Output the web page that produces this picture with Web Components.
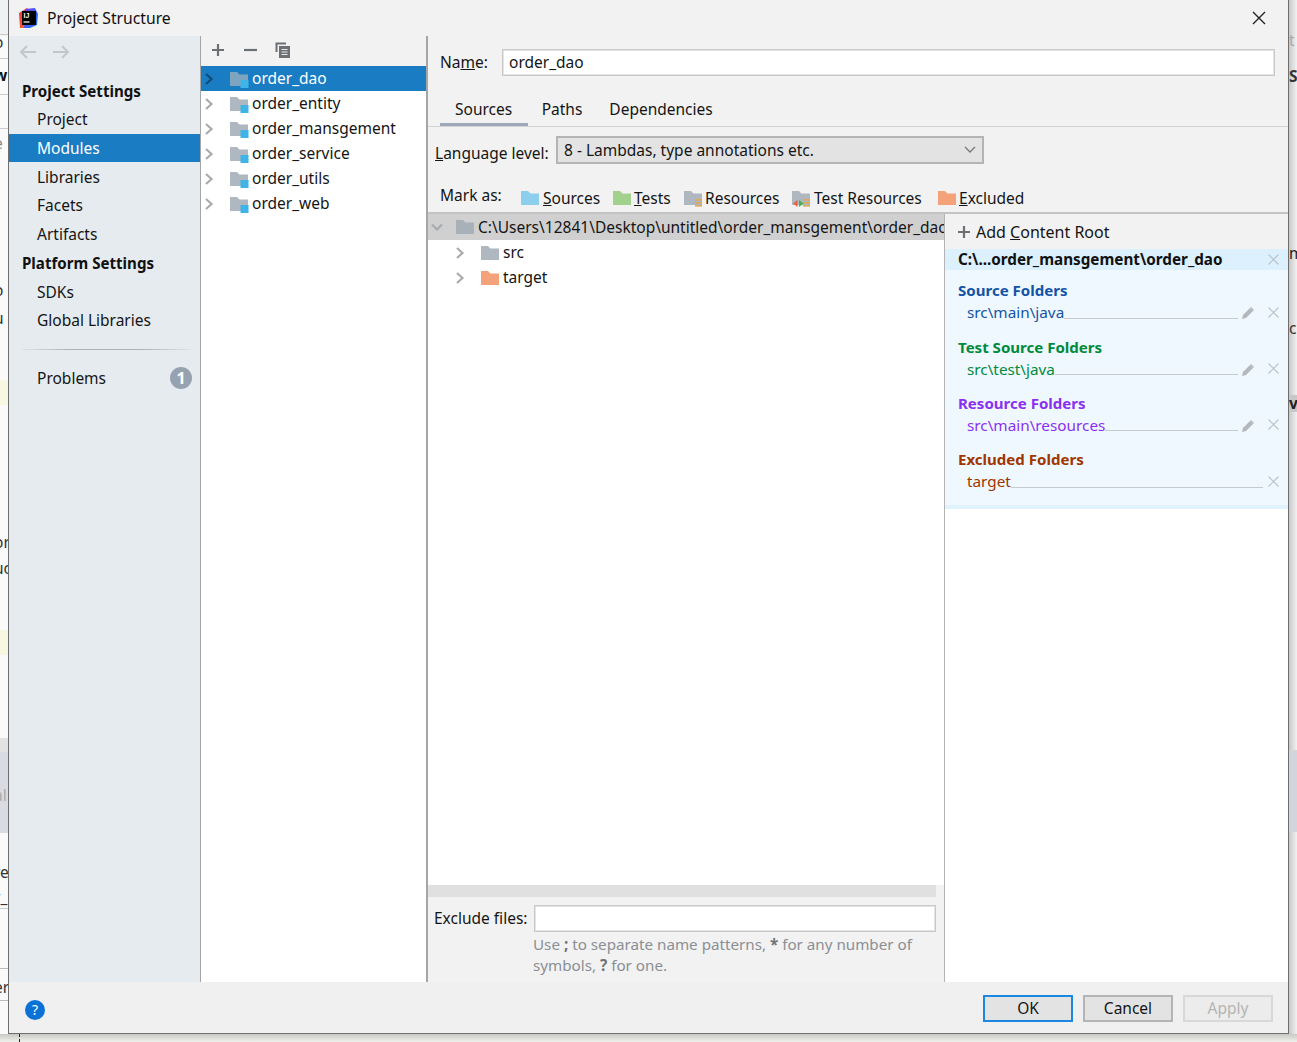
<!DOCTYPE html>
<html lang="en">
<head>
<meta charset="utf-8">
<title>Project Structure</title>
<style>
  html, body { margin: 0; height: 100%; overflow: hidden; }
  body { position: relative; background: #f4f4f2; font-family: "Noto Sans", "Open Sans", sans-serif; font-size: 15.5px; color: #151515; }
</style>
</head>
<body>
<desktop-scraps></desktop-scraps>
<structure-dialog>
  <title-bar slot="title">Project Structure</title-bar>

  <side-nav slot="nav">
    <nav-arrows></nav-arrows>
    <nav-head>Project Settings</nav-head>
    <nav-item>Project</nav-item>
    <nav-item selected>Modules</nav-item>
    <nav-item>Libraries</nav-item>
    <nav-item>Facets</nav-item>
    <nav-item>Artifacts</nav-item>
    <nav-head style="height: 28.7px">Platform Settings</nav-head>
    <nav-item>SDKs</nav-item>
    <nav-item>Global Libraries</nav-item>
    <nav-rule></nav-rule>
    <nav-item badge="1">Problems</nav-item>
  </side-nav>

  <module-list slot="modules">
    <tree-row selected>order_dao</tree-row>
    <tree-row>order_entity</tree-row>
    <tree-row>order_mansgement</tree-row>
    <tree-row>order_service</tree-row>
    <tree-row>order_utils</tree-row>
    <tree-row>order_web</tree-row>
  </module-list>

  <module-editor slot="editor"></module-editor>

  <dialog-footer slot="footer"></dialog-footer>
</structure-dialog>

<script>
  const font = `font-family: "Noto Sans", "Open Sans", sans-serif;`

  const folderPath = 'M0 1h7l2.5 2.5H18V15H0z'

  function folderIcon (color, extra = '') {
    return `<svg width="18" height="17" viewBox="0 0 18 17" style="display:block;flex:none;overflow:visible"><path d="${folderPath}" fill="${color}"/>${extra}</svg>`
  }

  const moduleMark = '<rect x="10.5" y="9" width="8" height="8" fill="#3fb4e6"/>'
  const resMark = '<g fill="#e0a85a"><rect x="11" y="9" width="7" height="1.6"/><rect x="11" y="12" width="7" height="1.6"/><rect x="11" y="15" width="7" height="1.6"/></g>'
  const testResMark = resMark + '<path d="M5.5 10v7L1 13.5z" fill="#e8643c"/><path d="M7 10v7l4.5-3.5z" fill="#4caf50"/>'

  function chevron (color, dir = 'right') {
    const d = dir === 'right' ? 'M2 1l5.5 5L2 11' : 'M1 3.5l5 5 5-5'
    return `<svg width="12" height="12" viewBox="0 0 12 12" style="display:block;flex:none"><path d="${d}" fill="none" stroke="${color}" stroke-width="2.2"/></svg>`
  }

  class Base extends HTMLElement {
    connectedCallback () {
      if (!this.shadowRoot) this.attachShadow({ mode: 'open' })
      this.render()
    }
  }

  class DesktopScraps extends Base {
    render () {
      const bits = [
        [0, 33, 'o', 400, '#333'], [0, 66, 'w', 700, '#111'], [0, 134, 'e', 400, '#888'],
        [0, 281, 'o', 400, '#333'], [0, 309, 'u', 400, '#333'], [0, 533, 'or', 400, '#333'],
        [0, 559, 'uc', 400, '#333'], [0, 786, 'al', 400, '#aaa'], [0, 863, 're', 400, '#333'],
        [0, 888, 'r_', 400, '#333'], [0, 978, 'er', 400, '#333']
      ].map(b => `<span style="left:${b[0] - 6}px;top:${b[1]}px;font-weight:${b[3]};color:${b[4]}">${b[2]}</span>`).join('')
      const right = [
        [1289, 31, 't', 400, '#aaa'], [1289, 67, 'SI', 700, '#333'], [1289, 244, 'm', 400, '#222'],
        [1289, 319, 'ci', 400, '#333'], [1289, 394, 'v', 700, '#222']
      ].map(b => `<span style="left:${b[0]}px;top:${b[1]}px;font-weight:${b[3]};color:${b[4]}">${b[2]}</span>`).join('')
      this.shadowRoot.innerHTML = `
      <style>
        :host { position: absolute; inset: 0; display: block; overflow: hidden; background: #fafafa; ${font} font-size: 15.5px; }
        span { position: absolute; line-height: 18px; }
        i { position: absolute; display: block; }
      </style>
      <i style="left:0;top:0;width:9px;height:36px;background:#eef2f2"></i>
      <i style="left:0;top:34px;width:9px;height:1px;background:#ccc"></i>
      <i style="left:0;top:58px;width:9px;height:1px;background:#ccc"></i>
      <i style="left:0;top:94px;width:9px;height:1px;background:#ccc"></i>
      <i style="left:0;top:128px;width:9px;height:1px;background:#ccc"></i>
      <i style="left:0;top:380px;width:9px;height:25px;background:#f7f7e2"></i>
      <i style="left:0;top:630px;width:9px;height:25px;background:#f7f7e2"></i>
      <i style="left:0;top:738px;width:9px;height:14px;background:#e2e2e2"></i>
      <i style="left:0;top:752px;width:9px;height:81px;background:#d8dce2"></i>
      <i style="left:0;top:908px;width:9px;height:1px;background:#ccc"></i>
      <i style="left:0;top:968px;width:9px;height:1px;background:#bbb"></i>
      <i style="left:0;top:1000px;width:9px;height:1px;background:#bbb"></i>
      <i style="left:1289px;top:0;width:8px;height:1042px;background:linear-gradient(90deg,#c8c8c8,#f2f2f2)"></i>
      <i style="left:1289px;top:395px;width:8px;height:17px;background:#c8c8c8"></i>
      <i style="left:1289px;top:750px;width:8px;height:82px;background:#d2d6dc"></i>
      <i style="left:0;top:1034px;width:1297px;height:8px;background:linear-gradient(180deg,#c8c8c4,#efefec)"></i>
      <i style="left:19px;top:1034px;width:0;height:8px;border-left:1px dashed #222"></i>
      ${bits}${right}
      `
    }
  }

  class StructureDialog extends Base {
    render () {
      this.shadowRoot.innerHTML = `
      <style>
        :host { position: absolute; left: 8px; top: 0; width: 1279px; height: 1033px; display: flex; flex-direction: column;
          background: #f2f2f2; border-left: 1px solid #6e6e6e; border-right: 1px solid #6e6e6e; border-bottom: 1px solid #6e6e6e; }
        .body { display: flex; height: 946px; }
        ::slotted([slot=nav]) { flex: none; }
      </style>
      <slot name="title"></slot>
      <div class="body">
        <slot name="nav"></slot>
        <slot name="modules"></slot>
        <slot name="editor"></slot>
      </div>
      <slot name="footer"></slot>
      `
    }
  }

  class TitleBar extends Base {
    render () {
      this.shadowRoot.innerHTML = `
      <style>
        :host { display: flex; align-items: center; height: 36px; flex: none; background: #f2f2f2; font-size: 15.7px; color: #111; }
        svg { display: block; }
        .logo { margin-left: 10px; margin-right: 9px; }
        .text { flex: 1; }
        .close { margin-right: 22px; }
      </style>
      <svg class="logo" width="19" height="20" viewBox="0 0 19 20">
        <defs>
          <linearGradient id="a" x1="0" y1="0" x2="1" y2="1"><stop offset="0" stop-color="#fe2857"/><stop offset="1" stop-color="#f97a12"/></linearGradient>
          <linearGradient id="b" x1="0" y1="0" x2="1" y2="1"><stop offset="0" stop-color="#7a3cf0"/><stop offset="1" stop-color="#087cfa"/></linearGradient>
        </defs>
        <path d="M0 5L8 0l4 4-6 16H1z" fill="url(#a)"/>
        <path d="M6 1l10-1 3 6-1 11-7 3H5z" fill="url(#b)"/>
        <rect x="3" y="3" width="14" height="14" fill="#000"/>
        <text x="4.6" y="10" font-size="7" font-weight="700" fill="#fff" font-family="Liberation Sans, sans-serif">IJ</text>
        <rect x="4.5" y="13.4" width="6" height="1.2" fill="#fff"/>
      </svg>
      <span class="text"><slot></slot></span>
      <svg class="close" width="14" height="14" viewBox="0 0 14 14"><path d="M1 1l12 12M13 1L1 13" stroke="#222" stroke-width="1.4" fill="none"/></svg>
      `
    }
  }

  class SideNav extends Base {
    render () {
      this.shadowRoot.innerHTML = `
      <style>
        :host { display: flex; flex-direction: column; width: 191px; background: #e6ebf0; border-right: 1px solid #a6a6a6; }
      </style>
      <slot></slot>
      `
    }
  }

  class NavArrows extends Base {
    render () {
      const arrow = d => `<svg width="18" height="14" viewBox="0 0 18 14"><path d="${d}" fill="none" stroke="#c4c7ca" stroke-width="2"/></svg>`
      this.shadowRoot.innerHTML = `
      <style>
        :host { display: flex; gap: 15px; height: 41.8px; padding-left: 10px; padding-top: 9px; box-sizing: border-box; }
      </style>
      ${arrow('M17 7H2M8 1L2 7l6 6')}
      ${arrow('M1 7h15M10 1l6 6-6 6')}
      `
    }
  }

  class NavHead extends Base {
    render () {
      this.shadowRoot.innerHTML = `
      <style>
        :host { display: flex; align-items: center; height: 27px; padding-left: 13px; font-weight: 700; font-size: 15.1px; color: #111; white-space: nowrap; }
      </style>
      <slot></slot>
      `
    }
  }

  class NavItem extends Base {
    render () {
      const selected = this.hasAttribute('selected')
      const badge = this.getAttribute('badge')
      this.shadowRoot.innerHTML = `
      <style>
        :host { display: flex; align-items: center; height: 28.75px; padding-left: 28px; padding-right: 8px;
          background: ${selected ? '#1a7dc4' : 'transparent'}; color: ${selected ? '#fff' : '#151515'}; white-space: nowrap; }
        .text { flex: 1; }
        .badge { width: 22px; height: 22px; border-radius: 50%; background: #96a2b0; color: #fff; font-size: 16px; font-weight: 700;
          display: flex; align-items: center; justify-content: center; }
      </style>
      <span class="text"><slot></slot></span>
      ${badge ? `<span class="badge">${badge}</span>` : ''}
      `
    }
  }

  class NavRule extends Base {
    render () {
      this.shadowRoot.innerHTML = `
      <style>
        :host { display: block; height: 1px; margin: 14px 9px 14px 13px; background: linear-gradient(90deg, #e0e3e6, #adb0b3 30%, #adb0b3 70%, #e0e3e6); }
      </style>
      `
    }
  }

  class ModuleList extends Base {
    render () {
      const tool = body => `<svg width="18" height="18" viewBox="0 0 18 18">${body}</svg>`
      this.shadowRoot.innerHTML = `
      <style>
        :host { display: flex; flex-direction: column; width: 225px; flex: none; background: #fff; border-right: 2px solid #a6a6a6; }
        .bar { display: flex; align-items: center; height: 30px; flex: none; background: #f2f2f2; padding-left: 8px; gap: 14px; box-sizing: border-box; padding-bottom: 3px; }
        svg { display: block; }
        svg:last-child { margin-left: 1px; }
      </style>
      <div class="bar">
        ${tool('<path d="M9 3v12M3 9h12" stroke="#6c7074" stroke-width="2.2"/>')}
        ${tool('<path d="M3 9h13" stroke="#6c7074" stroke-width="2.2"/>')}
        ${tool('<path d="M2.5 11V2.5H12" fill="none" stroke="#6c7074" stroke-width="2"/><rect x="5" y="5" width="11" height="12" fill="#6c7074"/><path d="M7.5 8.5h6M7.5 11h6M7.5 13.5h6" stroke="#e8e8e8" stroke-width="1.2"/>')}
      </div>
      <slot></slot>
      `
    }
  }

  class TreeRow extends Base {
    render () {
      const selected = this.hasAttribute('selected')
      this.shadowRoot.innerHTML = `
      <style>
        :host { display: flex; align-items: center; height: 25px; background: ${selected ? '#1a7dc4' : 'transparent'}; color: ${selected ? '#fff' : '#151515'}; white-space: nowrap; }
        .chev { margin-left: 3px; margin-right: 14px; }
        .ico { margin-right: 4px; margin-top: 1px; }
        .text { margin-bottom: 2px; }
      </style>
      <span class="chev">${chevron(selected ? '#0d4a78' : '#a8abae')}</span>
      <span class="ico">${folderIcon(selected ? '#7fa4c0' : '#afb8c0', moduleMark)}</span>
      <span class="text"><slot></slot></span>
      `
    }
  }

  class ModuleEditor extends Base {
    render () {
      const mark = (icon, text, width, gap = 3) => `<span class="mark" style="width:${width}px;gap:${gap}px">${icon}<span>${text}</span></span>`
      this.shadowRoot.innerHTML = `
      <style>
        :host { display: flex; flex-direction: column; flex: 1; min-width: 0; background: #f2f2f2; }
        .name { display: flex; align-items: center; height: 52px; flex: none; padding-left: 12px; }
        .name label { width: 62px; }
        .field { background: #fff; border: 1px solid #c8c8c8; box-shadow: inset 0 0 0 1px #e4e4e4; box-sizing: border-box; }
        .name .field { width: 773px; height: 27px; padding-left: 6px; line-height: 25px; }
        .tabs { display: flex; height: 39px; flex: none; padding-left: 12px; border-bottom: 1px solid #d2d2d2; box-sizing: border-box; }
        .tab { padding: 0 14px; line-height: 42px; height: 38px; }
        .tab:last-child { padding-left: 13px; }
        .tab.on { padding: 0 15.5px 0 15px; border-bottom: 3px solid #9da8ba; box-sizing: border-box; }
        .lang { display: flex; align-items: center; height: 46px; flex: none; padding-left: 7px; }
        .lang label { width: 121px; position: relative; top: 3px; }
        .combo { display: flex; align-items: center; justify-content: space-between; width: 428px; height: 28px; box-sizing: border-box;
          background: #e3e3e3; border: 2px solid #b4b4b4; padding: 0 6px; }
        .marks { display: flex; align-items: center; height: 39px; flex: none; padding-left: 12px; border-bottom: 2px solid #c4c4c4; box-sizing: content-box; }
        .marks > label { width: 81px; position: relative; top: 2px; }
        .mark { display: flex; align-items: center; flex: none; white-space: nowrap; position: relative; top: 5.5px; }
        .split { display: flex; flex: 1; min-height: 0; }
        .left { display: flex; flex-direction: column; width: 516px; flex: none; }
        .root { display: flex; align-items: center; height: 26px; flex: none; background: #d0d0d0; white-space: nowrap; overflow: hidden; }
        .root .chev { margin-left: 3px; margin-right: 13px; }
        .root .ico { margin-right: 4px; margin-top: 1px; }
        .files { flex: 1; background: #fff; padding: 0; }
        .scroll { height: 12px; flex: none; margin-right: 8px; background: #e0e0e0; }
        .exclude { height: 85px; flex: none; padding: 8px 8px 0 6px; box-sizing: border-box; }
        .ex-row { display: flex; align-items: center; height: 27px; }
        .ex-row label { width: 100px; margin-bottom: 2px; }
        .ex-row .field { flex: 1; height: 27px; }
        .hint { margin: 2px 0 0 99px; color: #8a8f94; line-height: 21px; font-size: 15.2px; }
        .hint b { color: #6e7276; }
      </style>
      <div class="name"><label>Na<u>m</u>e:</label><div class="field">order_dao</div></div>
      <div class="tabs"><div class="tab on">Sources</div><div class="tab">Paths</div><div class="tab">Dependencies</div></div>
      <div class="lang">
        <label><u>L</u>anguage level:</label>
        <div class="combo"><span>8 - Lambdas, type annotations etc.</span><svg width="12" height="8" viewBox="0 0 12 8"><path d="M1 1l5 5 5-5" fill="none" stroke="#777" stroke-width="1.3"/></svg></div>
      </div>
      <div class="marks">
        <label>Mark as:</label>
        ${mark(folderIcon('#8bcfec'), '<u>S</u>ources', 92, 4)}
        ${mark(folderIcon('#a1d18c'), '<u>T</u>ests', 71)}
        ${mark(folderIcon('#afb8c0', resMark), 'Resources', 108)}
        ${mark(folderIcon('#afb8c0', testResMark), 'Test Resources', 146, 4)}
        ${mark(folderIcon('#f4a27a'), '<u>E</u>xcluded', 90)}
      </div>
      <div class="split">
        <div class="left">
          <div class="root">
            <span class="chev">${chevron('#a8abae', 'down')}</span>
            <span class="ico">${folderIcon('#a8b0b8')}</span>
            <span>C:\\Users\\12841\\Desktop\\untitled\\order_mansgement\\order_dao</span>
          </div>
          <div class="files">
            <file-row>src</file-row>
            <file-row color="#f4a27a">target</file-row>
          </div>
          <div class="scroll"></div>
          <div class="exclude">
            <div class="ex-row"><label>Exclude files:</label><div class="field"></div></div>
            <div class="hint">Use <b>;</b> to separate name patterns, <b>*</b> for any number of symbols, <b>?</b> for one.</div>
          </div>
        </div>
        <root-panel></root-panel>
      </div>
      `
    }
  }

  class FileRow extends Base {
    render () {
      const color = this.getAttribute('color') || '#afb8c0'
      this.shadowRoot.innerHTML = `
      <style>
        :host { display: flex; align-items: center; height: 25px; padding-left: 27px; white-space: nowrap; }
        .chev { margin-right: 14px; }
        .ico { margin-right: 4px; margin-top: 1px; }
        .text { margin-bottom: 2px; }
      </style>
      <span class="chev">${chevron('#a8abae')}</span>
      <span class="ico">${folderIcon(color)}</span>
      <span class="text"><slot></slot></span>
      `
    }
  }

  const pencil = `<svg width="14" height="14" viewBox="0 0 14 14" style="display:block;flex:none"><path d="M1 13l1-4 7-7 3 3-7 7z" fill="#b4b8bc"/><path d="M10 1l3 3-1 1-3-3z" fill="#b4b8bc"/></svg>`
  const cross = color => `<svg width="11" height="11" viewBox="0 0 11 11" style="display:block;flex:none"><path d="M.5.5l10 10M10.5.5l-10 10" stroke="${color}" stroke-width="1.1" fill="none"/></svg>`

  class RootPanel extends Base {
    render () {
      this.shadowRoot.innerHTML = `
      <style>
        :host { display: flex; flex-direction: column; flex: 1; min-width: 0; background: #fff; border-left: 1px solid #b4b4b4; }
        .add { display: flex; align-items: center; height: 35px; flex: none; background: #f2f2f2; padding-left: 12px; gap: 5px; font-size: 16px; }
        .head { display: flex; align-items: center; height: 21px; flex: none; background: #dcf0fd; padding: 0 9px 0 13px; font-weight: 700; font-size: 15.25px; color: #111; }
        .head span { flex: 1; margin-bottom: 2px; }
        .list { flex: none; background: #eff8ff; padding-top: 8.4px; height: 235px; box-sizing: border-box; }
        .end { height: 4px; flex: none; background: #dff2fd; }
      </style>
      <div class="add"><svg width="14" height="14" viewBox="0 0 14 14"><path d="M7 1v12M1 7h12" stroke="#6c7074" stroke-width="2.2"/></svg><span>Add <u>C</u>ontent Root</span></div>
      <div class="head"><span>C:\\...order_mansgement\\order_dao</span>${cross('#b8c2ca')}</div>
      <div class="list">
        <folder-group title="Source Folders" path="src\\main\\java" color="#1353a6" edit></folder-group>
        <folder-group title="Test Source Folders" path="src\\test\\java" color="#008a3c" edit></folder-group>
        <folder-group title="Resource Folders" path="src\\main\\resources" color="#8a30f0" edit></folder-group>
        <folder-group title="Excluded Folders" path="target" color="#a03500"></folder-group>
      </div>
      <div class="end"></div>
      `
    }
  }

  class FolderGroup extends Base {
    render () {
      const color = this.getAttribute('color')
      const edit = this.hasAttribute('edit')
      this.shadowRoot.innerHTML = `
      <style>
        :host { display: block; height: 56.3px; padding-left: 13px; padding-right: 9px; color: ${color}; }
        .title { font-weight: 700; font-size: 15.05px; height: 24px; line-height: 24px; white-space: nowrap; }
        .row { display: flex; align-items: center; height: 20px; margin-left: 9px; white-space: nowrap; font-size: 15.3px; }
        .leader { flex: 1; height: 1px; background: #c6cbd0; position: relative; top: 6px; }
        .pen { margin: 2px 5px 0 3px; }
        .x { margin-left: ${edit ? '8px' : '5px'}; }
      </style>
      <div class="title">${this.getAttribute('title')}</div>
      <div class="row"><span>${this.getAttribute('path')}</span><span class="leader"></span>${edit ? `<span class="pen">${pencil}</span>` : ''}<span class="x">${cross('#b8c2ca')}</span></div>
      `
    }
  }

  class DialogFooter extends Base {
    render () {
      this.shadowRoot.innerHTML = `
      <style>
        :host { display: flex; align-items: center; height: 51px; flex: none; background: #f0f0f0; padding: 2px 15px 0 16px; box-sizing: border-box; gap: 10px; }
        .help { width: 20px; height: 20px; border-radius: 50%; background: #0a72d6; color: #fff; font-size: 14px; text-align: center; line-height: 20px; margin-right: auto; position: relative; top: 1px; }
      </style>
      <div class="help">?</div>
      <dlg-button kind="primary">OK</dlg-button>
      <dlg-button>Cancel</dlg-button>
      <dlg-button kind="off">Apply</dlg-button>
      `
    }
  }

  class DlgButton extends Base {
    render () {
      const kind = this.getAttribute('kind')
      const border = kind === 'primary' ? '#1a88e0' : kind === 'off' ? '#d8d8d8' : '#b4b4b4'
      this.shadowRoot.innerHTML = `
      <style>
        :host { display: flex; align-items: center; justify-content: center; width: 90px; height: 27px; box-sizing: border-box; padding-bottom: 2px;
          background: ${kind === 'off' ? '#ececec' : '#e3e3e3'}; border: 2px solid ${border}; color: ${kind === 'off' ? '#b4b4b4' : '#151515'}; }
      </style>
      <slot></slot>
      `
    }
  }

  const tags = {
    'desktop-scraps': DesktopScraps, 'structure-dialog': StructureDialog, 'title-bar': TitleBar, 'side-nav': SideNav,
    'nav-arrows': NavArrows, 'nav-head': NavHead, 'nav-item': NavItem, 'nav-rule': NavRule, 'module-list': ModuleList,
    'tree-row': TreeRow, 'module-editor': ModuleEditor, 'file-row': FileRow, 'root-panel': RootPanel,
    'folder-group': FolderGroup, 'dialog-footer': DialogFooter, 'dlg-button': DlgButton
  }
  for (const name in tags) customElements.define(name, tags[name])
</script>
</body>
</html>
